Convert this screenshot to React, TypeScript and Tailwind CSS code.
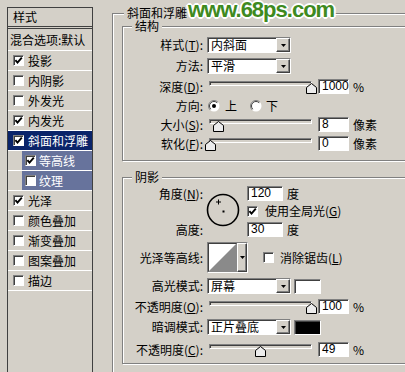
import React from 'react';

const layers = [
  { name: '投影', on: true },
  { name: '内阴影' },
  { name: '外发光' },
  { name: '内发光', on: true },
  { name: '斜面和浮雕', on: true, sel: true },
  { name: '等高线', on: true, sub: true },
  { name: '纹理', sub: true },
  { name: '光泽', on: true },
  { name: '颜色叠加' },
  { name: '渐变叠加' },
  { name: '图案叠加' },
  { name: '描边' },
];

const sunken = 'border border-[#808080] border-b-white border-r-white shadow-[inset_1px_1px_0_#404040]';

function Check({ on = false }: { on?: boolean }) {
  return (
    <span className={`w-[11px] h-[11px] shrink-0 bg-white flex items-center justify-center ${sunken}`}>
      {on && (
        <svg width="9" height="9" viewBox="0 0 9 9" className="block">
          <path d="M1.4 4.2 L3.5 6.6 L7.8 1.6" fill="none" stroke="#000" strokeWidth="1.9" />
        </svg>
      )}
    </span>
  );
}

function Radio({ on = false }: { on?: boolean }) {
  return (
    <svg width="12" height="12" viewBox="0 0 12 12" className="shrink-0">
      <circle cx="6" cy="6" r="5.5" fill="#fff" />
      <path d="M2.1 9.9 A5.5 5.5 0 0 1 9.9 2.1" stroke="#808080" fill="none" />
      <path d="M2.8 9.2 A4.5 4.5 0 0 1 9.2 2.8" stroke="#404040" fill="none" />
      {on && <circle cx="6" cy="6" r="2" fill="#000" />}
    </svg>
  );
}

function Field({ v, w = 'w-[31px]' }: { v: string; w?: string }) {
  return (
    <div className={`${w} h-[15px] shrink-0 bg-white pl-[3px] font-['Liberation_Sans',sans-serif] text-[12px] leading-[13px] ${sunken}`}>
      {v}
    </div>
  );
}

function DropBtn({ w = 'w-[14px]', h = 'h-[14px]' }: { w?: string; h?: string }) {
  return (
    <span className={`${w} ${h} shrink-0 bg-[#d4d0c8] border border-white border-b-[#404040] border-r-[#404040] shadow-[inset_-1px_-1px_0_#808080] flex items-center justify-center`}>
      <svg width="5" height="3" viewBox="0 0 5 3">
        <path d="M0 0 H5 L2.5 3 Z" fill="#000" />
      </svg>
    </span>
  );
}

function Select({ v }: { v: string }) {
  return (
    <div className={`w-[84px] h-[16px] shrink-0 bg-white flex items-center justify-between pl-[3px] ${sunken}`}>
      <span className="leading-[14px]">{v}</span>
      <DropBtn />
    </div>
  );
}

function Slider({ pos }: { pos: number }) {
  return (
    <div className="relative w-[103px] h-[15px] shrink-0">
      <div className={`mt-[3px] h-[5px] bg-[#d4d0c8] ${sunken}`} />
      <svg width="11" height="11" viewBox="0 0 11 11" className="absolute top-[2px]" style={{ left: Math.round(pos) - 4 }}>
        <path d="M5.5 0.5 L10.5 4.5 V10.5 H0.5 V4.5 Z" fill="#ececec" stroke="#000" />
      </svg>
    </div>
  );
}

function Swatch({ dark = false }: { dark?: boolean }) {
  return <div className={`w-[27px] h-[15px] shrink-0 ${dark ? 'bg-black' : 'bg-white'} ${sunken}`} />;
}

function Label({ children }: { children: React.ReactNode }) {
  return <div className="w-[80px] shrink-0 text-right leading-[14px]">{children}</div>;
}

function Group({ title, className, children }: { title: string; className: string; children: React.ReactNode }) {
  return (
    <div className={`relative border border-[#808080] shadow-[inset_1px_1px_0_#fff,1px_1px_0_#fff] ${className}`}>
      <span className="absolute -top-[7px] left-[9px] px-[3px] bg-[#d4d0c8] leading-[12px]">{title}</span>
      {children}
    </div>
  );
}

function SliderRow({ label, pos, v, unit }: { label: React.ReactNode; pos: number; v: string; unit: string }) {
  return (
    <div className="flex items-center h-[15px]">
      <Label>{label}</Label>
      <div className="ml-[6px]">
        <Slider pos={pos} />
      </div>
      <div className="ml-[6px]">
        <Field v={v} />
      </div>
      <span className="ml-[4px] leading-[14px]">{unit}</span>
    </div>
  );
}

function LayerList() {
  return (
    <div className="w-[86px] h-[380px] shrink-0 border border-b-0 border-[#404040] flex flex-col">
      <div className="h-[18px] pl-[5px] flex items-center">样式</div>
      <div className="h-[3px] border-y border-[#404040]" />
      <div className="h-[22px] pl-[2px] flex items-center border-b border-white">混合选项:默认</div>
      {layers.map((l) => (
        <div key={l.name} className="h-[20px] flex border-b border-white">
          {l.sub && <div className="w-[14px] shrink-0" />}
          <div
            className={`flex-1 flex items-center ${
              l.sel ? 'bg-[#0a246a] text-white' : l.sub ? 'bg-[#67739c] text-white' : ''
            } ${l.sub ? 'pl-[3px] gap-[3px]' : 'pl-[5px] gap-[4px]'}`}
          >
            <Check on={l.on} />
            <span>{l.name}</span>
          </div>
        </div>
      ))}
    </div>
  );
}

export default function App() {
  return (
    <div className="relative w-[405px] h-[372px] overflow-hidden bg-[#d4d0c8] flex items-start pt-[7px] pl-[7px] text-[12px] text-black font-['Noto_Sans_CJK_SC','Noto_Sans',sans-serif]">
      <LayerList />

      <div className="ml-[19px] mt-[6px] w-[320px] h-[400px] shrink-0 relative border border-[#808080] shadow-[inset_1px_1px_0_#fff]">
        <span className="absolute -top-[7px] left-[11px] px-[3px] bg-[#d4d0c8] leading-[12px]">斜面和浮雕</span>

        <Group title="结构" className="ml-[9px] mt-[12px] w-[300px] pt-[10px] pb-[9px]">
          <div className="flex items-center h-[16px]">
            <Label>样式(<span className="underline">T</span>):</Label>
            <div className="ml-[4px]"><Select v="内斜面" /></div>
          </div>
          <div className="flex items-center h-[16px] mt-[5px]">
            <Label>方法:</Label>
            <div className="ml-[4px]"><Select v="平滑" /></div>
          </div>
          <div className="mt-[5px]">
            <SliderRow label={<>深度(<span className="underline">D</span>):</>} pos={101} v="1000" unit="%" />
          </div>
          <div className="flex items-center h-[15px] mt-[4px]">
            <Label>方向:</Label>
            <div className="ml-[5px] flex items-center">
              <Radio on />
              <span className="ml-[5px]">上</span>
              <span className="ml-[13px] flex"><Radio /></span>
              <span className="ml-[4px]">下</span>
            </div>
          </div>
          <div className="mt-[4px]">
            <SliderRow label={<>大小(<span className="underline">S</span>):</>} pos={8} v="8" unit="像素" />
          </div>
          <div className="mt-[4px]">
            <SliderRow label={<>软化(<span className="underline">F</span>):</>} pos={0} v="0" unit="像素" />
          </div>
        </Group>

        <Group title="阴影" className="ml-[9px] mt-[16px] w-[300px] pt-[8px] pb-[6px]">
          <div className="flex">
            <div className="w-[80px] h-[51px] shrink-0 flex flex-col justify-between text-right leading-[15px]">
              <div>角度(<span className="underline">N</span>):</div>
              <div>高度:</div>
            </div>
            <svg width="34" height="34" viewBox="0 0 34 34" className="ml-[3px] mt-[7px] shrink-0">
              <circle cx="17" cy="17" r="15.5" fill="none" stroke="#000" strokeWidth="1.6" />
              <path d="M12.5 6.5 V11.5 M10 9 H15" stroke="#000" strokeWidth="1" />
              <rect x="16.5" y="17.5" width="2" height="2" fill="#000" />
            </svg>
            <div className="ml-[7px] flex flex-col">
              <div className="flex items-center h-[15px]">
                <Field v="120" w="w-[36px]" />
                <span className="ml-[4px]">度</span>
              </div>
              <div className="flex items-center h-[12px] mt-[4px]">
                <Check on />
                <span className="ml-[7px]">使用全局光(<span className="underline">G</span>)</span>
              </div>
              <div className="flex items-center h-[15px] mt-[5px]">
                <Field v="30" w="w-[36px]" />
                <span className="ml-[4px]">度</span>
              </div>
            </div>
          </div>

          <div className="flex items-center h-[31px] mt-[5px]">
            <Label>光泽等高线:</Label>
            <div className={`ml-[4px] w-[41px] h-[31px] shrink-0 flex bg-white ${sunken}`}>
              <svg width="29" height="29" viewBox="0 0 29 29" className="shrink-0">
                <path d="M0 29 L29 0 V29 Z" fill="#8a8a8a" />
              </svg>
              <DropBtn w="w-[10px]" h="h-[29px]" />
            </div>
            <div className="ml-[15px] flex items-center">
              <Check />
              <span className="ml-[6px]">消除锯齿(<span className="underline">L</span>)</span>
            </div>
          </div>

          <div className="flex items-center h-[16px] mt-[5px]">
            <Label>高光模式:</Label>
            <div className="ml-[4px]"><Select v="屏幕" /></div>
            <div className="ml-[3px]"><Swatch /></div>
          </div>
          <div className="mt-[5px]">
            <SliderRow label={<>不透明度(<span className="underline">O</span>):</>} pos={101} v="100" unit="%" />
          </div>
          <div className="flex items-center h-[16px] mt-[5px]">
            <Label>暗调模式:</Label>
            <div className="ml-[4px]"><Select v="正片叠底" /></div>
            <div className="ml-[3px]"><Swatch dark /></div>
          </div>
          <div className="mt-[7px]">
            <SliderRow label={<>不透明度(<span className="underline">C</span>):</>} pos={49.5} v="49" unit="%" />
          </div>
        </Group>
      </div>

      <div className="absolute left-[188px] top-0 font-['Liberation_Sans',sans-serif] font-bold text-[22px] leading-[20px] tracking-[-1px] text-[#3f8a1f] [text-shadow:0_0_2px_#fff,1px_1px_0_#fff,-1px_-1px_0_#fff,1px_-1px_0_#fff,-1px_1px_0_#fff,2px_0_0_#fff,-2px_0_0_#fff,0_2px_0_#fff,0_-2px_0_#fff]">
        www.68ps.com
      </div>
    </div>
  );
}
